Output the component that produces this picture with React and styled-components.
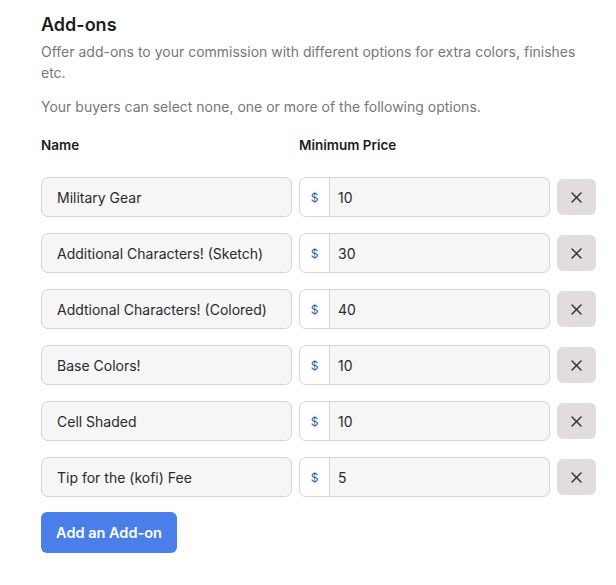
import React from 'react';
import styled, { createGlobalStyle } from 'styled-components';

const GlobalStyle = createGlobalStyle`
  body {
    margin: 0;
    background: #ffffff;
    font-family: Inter, "Noto Sans", sans-serif;
    color: #1f1f1f;
  }
`;

const Section = styled.div`
  padding: 14px 20px 0 41px;
  width: 555px;
`;

const Title = styled.h2`
  font-size: 18px;
  font-weight: 600;
  margin: 0 0 6px;
  color: #1c1c1c;
`;

const Text = styled.p`
  font-size: 14px;
  line-height: 21px;
  color: #7a7676;
  margin: 0 0 ${({ $gap }) => $gap || 13}px;
`;

const Grid = styled.div`
  display: grid;
  grid-template-columns: 251px 251px 39px;
  column-gap: 7px;
  row-gap: 16px;
  align-items: center;
`;

const Label = styled.div`
  font-size: 13.5px;
  font-weight: 600;
  color: #1c1c1c;
  margin-bottom: 8px;
`;

const Field = styled.div`
  height: 40px;
  box-sizing: border-box;
  border: 1px solid #d8d2d2;
  border-radius: 7px;
  background: #f6f6f6;
  display: flex;
  align-items: center;
  font-size: 14px;
  color: #2a2a2a;
  overflow: hidden;
`;

const NameText = styled.span`
  padding-left: 15px;
`;

const Prefix = styled.span`
  width: 30px;
  height: 100%;
  background: #ffffff;
  border-right: 1px solid #d8d2d2;
  display: flex;
  align-items: center;
  justify-content: center;
  font-size: 12px;
  color: #2f5fa8;
  box-sizing: border-box;
`;

const Value = styled.span`
  padding-left: 8px;
`;

const RemoveButton = styled.button`
  width: 39px;
  height: 36px;
  border: none;
  border-radius: 6px;
  background: #e2dcdc;
  display: flex;
  align-items: center;
  justify-content: center;
  cursor: pointer;
  padding: 0;
`;

const AddButton = styled.button`
  margin-top: 15px;
  width: 136px;
  height: 41px;
  border: none;
  border-radius: 6px;
  background: #4a7fea;
  color: #ffffff;
  font-family: inherit;
  font-size: 14.5px;
  font-weight: 600;
  cursor: pointer;
`;

const addons = [
  { name: 'Military Gear', price: 10 },
  { name: 'Additional Characters! (Sketch)', price: 30 },
  { name: 'Addtional Characters! (Colored)', price: 40 },
  { name: 'Base Colors!', price: 10 },
  { name: 'Cell Shaded', price: 10 },
  { name: 'Tip for the (kofi) Fee', price: 5 },
];

const Cross = () => (
  <svg width="11" height="11" viewBox="0 0 11 11">
    <path d="M1 1L10 10M10 1L1 10" stroke="#2a2a2a" strokeWidth="1.4" strokeLinecap="round" />
  </svg>
);

const App = () => {
  return (
    <Section>
      <GlobalStyle />
      <Title>Add-ons</Title>
      <Text>Offer add-ons to your commission with different options for extra colors, finishes etc.</Text>
      <Text $gap={20}>Your buyers can select none, one or more of the following options.</Text>
      <Grid>
        <Label>Name</Label>
        <Label>Minimum Price</Label>
        <div />
        {addons.map((a, i) => (
          <React.Fragment key={i}>
            <Field>
              <NameText>{a.name}</NameText>
            </Field>
            <Field>
              <Prefix>$</Prefix>
              <Value>{a.price}</Value>
            </Field>
            <RemoveButton>
              <Cross />
            </RemoveButton>
          </React.Fragment>
        ))}
      </Grid>
      <AddButton>Add an Add-on</AddButton>
    </Section>
  );
};

export default App;
